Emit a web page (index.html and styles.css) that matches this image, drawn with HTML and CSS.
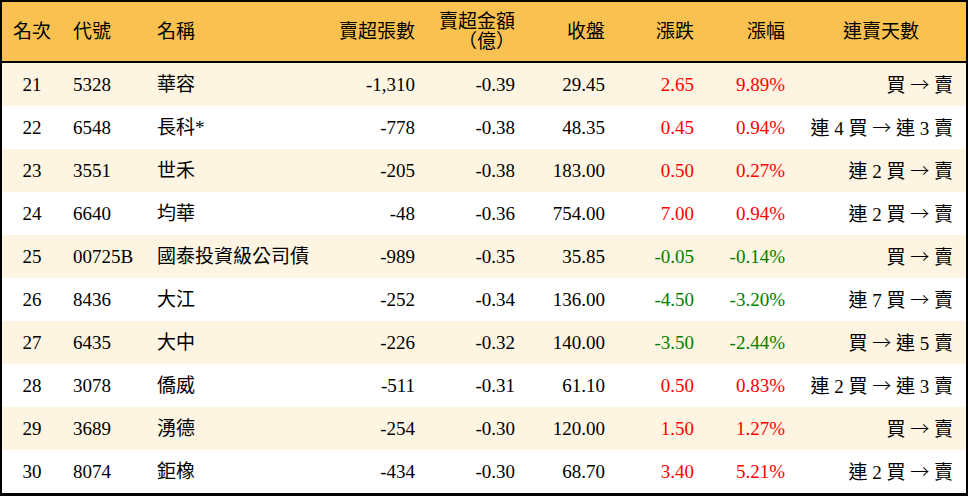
FILE: index.html
```html
<!DOCTYPE html>
<html lang="zh-Hant">
<head>
<meta charset="utf-8">
<link rel="stylesheet" href="styles.css">
</head>
<body>
<div class="board">
  <div class="row head">
    <div class="c center">名次</div>
    <div class="c left">代號</div>
    <div class="c left">名稱</div>
    <div class="c right">賣超張數</div>
    <div class="c right">賣超金額<br>（億）</div>
    <div class="c right">收盤</div>
    <div class="c right">漲跌</div>
    <div class="c right">漲幅</div>
    <div class="c center">連賣天數</div>
  </div>
  <div class="row odd">
    <div class="c center">21</div><div class="c left">5328</div><div class="c left">華容</div>
    <div class="c right">-1,310</div><div class="c right">-0.39</div><div class="c right">29.45</div>
    <div class="c right up">2.65</div><div class="c right up">9.89%</div><div class="c right last">買 <span class="arrow">→</span> 賣</div>
  </div>
  <div class="row">
    <div class="c center">22</div><div class="c left">6548</div><div class="c left">長科*</div>
    <div class="c right">-778</div><div class="c right">-0.38</div><div class="c right">48.35</div>
    <div class="c right up">0.45</div><div class="c right up">0.94%</div><div class="c right last">連 4 買 <span class="arrow">→</span> 連 3 賣</div>
  </div>
  <div class="row odd">
    <div class="c center">23</div><div class="c left">3551</div><div class="c left">世禾</div>
    <div class="c right">-205</div><div class="c right">-0.38</div><div class="c right">183.00</div>
    <div class="c right up">0.50</div><div class="c right up">0.27%</div><div class="c right last">連 2 買 <span class="arrow">→</span> 賣</div>
  </div>
  <div class="row">
    <div class="c center">24</div><div class="c left">6640</div><div class="c left">均華</div>
    <div class="c right">-48</div><div class="c right">-0.36</div><div class="c right">754.00</div>
    <div class="c right up">7.00</div><div class="c right up">0.94%</div><div class="c right last">連 2 買 <span class="arrow">→</span> 賣</div>
  </div>
  <div class="row odd">
    <div class="c center">25</div><div class="c left">00725B</div><div class="c left">國泰投資級公司債</div>
    <div class="c right">-989</div><div class="c right">-0.35</div><div class="c right">35.85</div>
    <div class="c right down">-0.05</div><div class="c right down">-0.14%</div><div class="c right last">買 <span class="arrow">→</span> 賣</div>
  </div>
  <div class="row">
    <div class="c center">26</div><div class="c left">8436</div><div class="c left">大江</div>
    <div class="c right">-252</div><div class="c right">-0.34</div><div class="c right">136.00</div>
    <div class="c right down">-4.50</div><div class="c right down">-3.20%</div><div class="c right last">連 7 買 <span class="arrow">→</span> 賣</div>
  </div>
  <div class="row odd">
    <div class="c center">27</div><div class="c left">6435</div><div class="c left">大中</div>
    <div class="c right">-226</div><div class="c right">-0.32</div><div class="c right">140.00</div>
    <div class="c right down">-3.50</div><div class="c right down">-2.44%</div><div class="c right last">買 <span class="arrow">→</span> 連 5 賣</div>
  </div>
  <div class="row">
    <div class="c center">28</div><div class="c left">3078</div><div class="c left">僑威</div>
    <div class="c right">-511</div><div class="c right">-0.31</div><div class="c right">61.10</div>
    <div class="c right up">0.50</div><div class="c right up">0.83%</div><div class="c right last">連 2 買 <span class="arrow">→</span> 連 3 賣</div>
  </div>
  <div class="row odd">
    <div class="c center">29</div><div class="c left">3689</div><div class="c left">湧德</div>
    <div class="c right">-254</div><div class="c right">-0.30</div><div class="c right">120.00</div>
    <div class="c right up">1.50</div><div class="c right up">1.27%</div><div class="c right last">買 <span class="arrow">→</span> 賣</div>
  </div>
  <div class="row">
    <div class="c center">30</div><div class="c left">8074</div><div class="c left">鉅橡</div>
    <div class="c right">-434</div><div class="c right">-0.30</div><div class="c right">68.70</div>
    <div class="c right up">3.40</div><div class="c right up">5.21%</div><div class="c right last">連 2 買 <span class="arrow">→</span> 賣</div>
  </div>
</div>
</body>
</html>
```
FILE: styles.css
```css
html, body {
  margin: 0;
  padding: 0;
  background: #ffffff;
}
.board {
  box-sizing: border-box;
  width: 968px;
  height: 496px;
  border: 2px solid #000;
  border-bottom-width: 3px;
  font-family: "Liberation Serif", "Noto Sans CJK TC", serif;
  font-size: 19px;
  line-height: 20px;
  color: #000;
  background: #fff;
}
.row {
  display: grid;
  grid-template-columns: 60px 84px 180px 100px 100px 90px 89px 91px 170px;
  align-items: center;
  height: 43px;
}
.row.head {
  height: 59px;
  background: #f8c150;
  border-bottom: 2px solid #000;
}
.row.odd {
  background: #fdf5e2;
}
.c {
  white-space: nowrap;
}
.center {
  text-align: center;
}
.left {
  text-align: left;
  padding-left: 11px;
}
.right {
  text-align: right;
  padding-right: 11px;
}
.last {
  padding-right: 13px;
}
.arrow {
  font-family: "Noto Sans CJK TC", sans-serif;
  font-weight: 300;
}
.up {
  color: #ff0000;
}
.down {
  color: #008000;
}
```
